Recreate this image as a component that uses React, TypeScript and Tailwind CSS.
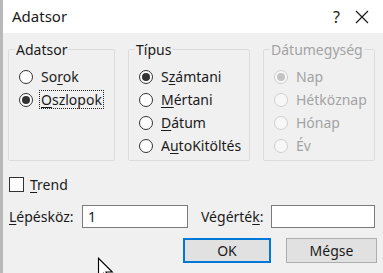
import React from "react";

type Opt = { pre: string; key: string; post: string; checked?: boolean };

const Radio: React.FC<{ opt: Opt; disabled?: boolean; focus?: boolean }> = ({
  opt,
  disabled,
  focus,
}) => (
  <div className="flex h-[23px] items-center gap-[8px]">
    <span
      className={`flex h-[14px] w-[14px] shrink-0 items-center justify-center rounded-full border ${
        disabled ? "border-[#cfcfcf] bg-[#f7f7f7]" : "border-[#333] bg-white"
      }`}
    >
      {opt.checked && (
        <span
          className={`h-[8px] w-[8px] rounded-full ${
            disabled ? "bg-[#c4c4c4]" : "bg-[#333]"
          }`}
        />
      )}
    </span>
    <span
      className={`leading-[17px] ${
        focus ? "-ml-[2px] border border-dotted border-[#222] px-[1px]" : ""
      } ${disabled ? "text-[#a3a3a3]" : "text-[#1a1a1a]"}`}
    >
      {opt.pre}
      {opt.key && <span className="underline underline-offset-[2px]">{opt.key}</span>}
      {opt.post}
    </span>
  </div>
);

const Group: React.FC<{
  title: string;
  width: string;
  disabled?: boolean;
  children: React.ReactNode;
}> = ({ title, width, disabled, children }) => (
  <fieldset
    className={`${width} h-[121px] rounded-[2px] border border-[#dcdcdc] pl-[6px] pr-[6px]`}
  >
    <legend
      className={`px-[1px] leading-[19px] ${
        disabled ? "text-[#a3a3a3]" : "text-[#1a1a1a]"
      }`}
    >
      {title}
    </legend>
    <div className="flex flex-col pl-[4px] pt-[6px]">{children}</div>
  </fieldset>
);

export default function App() {
  const adatsor: Opt[] = [
    { pre: "So", key: "r", post: "ok" },
    { pre: "", key: "O", post: "szlopok", checked: true },
  ];
  const tipus: Opt[] = [
    { pre: "S", key: "z", post: "ámtani", checked: true },
    { pre: "", key: "M", post: "értani" },
    { pre: "", key: "D", post: "átum" },
    { pre: "A", key: "u", post: "toKitöltés" },
  ];
  const datum: Opt[] = [
    { pre: "Nap", key: "", post: "", checked: true },
    { pre: "Hétköznap", key: "", post: "" },
    { pre: "Hónap", key: "", post: "" },
    { pre: "Év", key: "", post: "" },
  ];

  return (
    <div
      className="relative flex h-[273px] w-[383px] overflow-hidden bg-[#f0f0f0] text-[14px] text-[#1a1a1a]"
      style={{ fontFamily: '"Noto Sans", "Open Sans", sans-serif' }}
    >
      <div className="w-[3px] shrink-0 bg-[#b9b9b9]" />
      <div className="flex flex-1 flex-col">
        {/* Title bar */}
        <div className="flex h-[33px] items-center bg-white pl-[9px] pr-[14px]">
          <span className="flex-1 text-[15px]">Adatsor</span>
          <span className="mr-[15px] text-[16px]">?</span>
          <svg width="14" height="14" viewBox="0 0 14 14">
            <path d="M1 1 L13 13 M13 1 L1 13" stroke="#1a1a1a" strokeWidth="1.2" />
          </svg>
        </div>

        {/* Groups */}
        <div className="flex gap-[13px] pl-[5px] pt-[7px]">
          <Group title="Adatsor" width="w-[107px]">
            {adatsor.map((o, i) => (
              <Radio key={i} opt={o} focus={i === 1} />
            ))}
          </Group>
          <Group title="Típus" width="w-[122px]">
            {tipus.map((o, i) => (
              <Radio key={i} opt={o} />
            ))}
          </Group>
          <Group title="Dátumegység" width="w-[112px]" disabled>
            {datum.map((o, i) => (
              <Radio key={i} opt={o} disabled />
            ))}
          </Group>
        </div>

        {/* Trend */}
        <div className="mt-[13px] flex items-center gap-[6px] pl-[6px]">
          <span className="h-[15px] w-[15px] border border-[#333] bg-white" />
          <span>
            <span className="underline underline-offset-[2px]">T</span>rend
          </span>
        </div>

        {/* Step / stop values */}
        <div className="mt-[10px] flex items-center pl-[6px]">
          <span className="w-[73px]">
            <span className="underline underline-offset-[2px]">L</span>épésköz:
          </span>
          <div className="flex h-[23px] w-[106px] items-center border border-[#7a7a7a] bg-white pl-[5px]">
            1
          </div>
          <span className="ml-[13px] w-[70px]">
            Végérté<span className="underline underline-offset-[2px]">k</span>:
          </span>
          <div className="h-[23px] w-[104px] border border-[#7a7a7a] bg-white" />
        </div>

        {/* Buttons */}
        <div className="mt-[10px] flex gap-[15px] pl-[180px]">
          <button className="h-[25px] w-[88px] border-2 border-[#0078d7] bg-[#e1e1e1]">
            OK
          </button>
          <button className="h-[25px] w-[91px] border border-[#adadad] bg-[#e1e1e1]">
            Mégse
          </button>
        </div>
      </div>

      {/* Mouse cursor */}
      <svg
        className="absolute left-[97px] top-[257px]"
        width="18"
        height="25"
        viewBox="0 0 14 20"
      >
        <path d="M1 1 L1 17 L5 13 L8 19 L10 18 L7 12 L12 12 Z" fill="white" stroke="black" strokeWidth="0.9" />
      </svg>
    </div>
  );
}
